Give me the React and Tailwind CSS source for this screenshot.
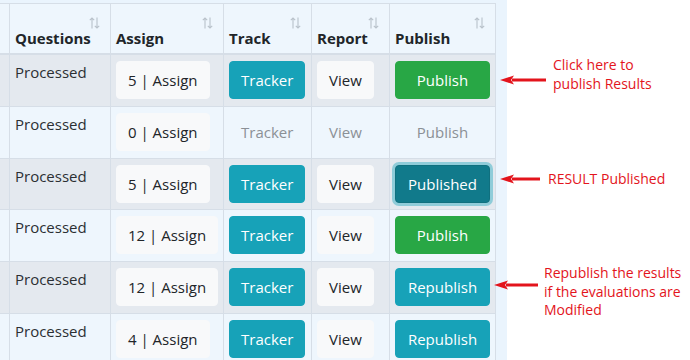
import React from "react";

const font = { fontFamily: '"Open Sans", "Noto Sans", sans-serif' };

function SortIcon() {
  return (
    <svg width="11" height="12" viewBox="0 0 11 12" className="absolute right-[10px] top-[13px]" fill="none" stroke="#b9c2cb" strokeWidth="1.1">
      <path d="M3 11.5V1M0.8 3.2L3 1l2.2 2.2" />
      <path d="M8 0.5V11M5.8 8.8L8 11l2.2-2.2" />
    </svg>
  );
}

const widths = ["w-[10px]", "w-[101px]", "w-[113px]", "w-[88px]", "w-[78px]", "w-[106px]"];

function HeaderCell({ w, label }) {
  return (
    <div className={`${w} relative shrink-0 border-r border-[#d6dee7] ${label ? "px-[5px]" : ""} pb-[4px] flex items-end`}>
      {label && <SortIcon />}
      {label && <span className="text-[15px] font-bold text-[#212529] leading-[22px] whitespace-nowrap">{label}</span>}
    </div>
  );
}

function Btn({ kind, children }) {
  const base = "h-[38px] rounded-[4px] text-[15px] flex items-center justify-center border whitespace-nowrap";
  const cls = {
    light: "bg-[#f8f9fa] border-[#f8f9fa] text-[#212529] px-[11px]",
    info: "bg-[#17a2b8] border-[#17a2b8] text-white px-[11px]",
    success: "bg-[#28a745] border-[#28a745] text-white w-full",
    infoFull: "bg-[#17a2b8] border-[#17a2b8] text-white w-full",
    published: "bg-[#117a8b] border-[#10707f] text-white w-full shadow-[0_0_0_3px_rgba(58,176,195,0.5)]",
    disabled: "bg-transparent border-transparent text-[#8b9096] px-[11px]",
    disabledFull: "bg-transparent border-transparent text-[#8b9096] w-full",
  }[kind];
  return <div className={`${base} ${cls}`}>{children}</div>;
}

const rows = [
  { n: "5", track: "info", view: "light", pub: ["success", "Publish"], h: "h-[52px]" },
  { n: "0", track: "disabled", view: "disabled", pub: ["disabledFull", "Publish"], h: "h-[52px]" },
  { n: "5", track: "info", view: "light", pub: ["published", "Published"], h: "h-[51px]" },
  { n: "12", track: "info", view: "light", pub: ["success", "Publish"], h: "h-[52px]" },
  { n: "12", track: "info", view: "light", pub: ["infoFull", "Republish"], h: "h-[52px]" },
  { n: "4", track: "info", view: "light", pub: ["infoFull", "Republish"], h: "h-[52px]" },
];

function Row({ r, i }) {
  const bg = i % 2 === 0 ? "bg-[#e4e9ef]" : "bg-[#eef6fd]";
  const cell = "shrink-0 border-r border-[#d6dee7]";
  return (
    <div className={`flex ${r.h} border-b border-[#d6dee7] ${bg}`}>
      <div className={`${widths[0]} ${cell}`} />
      <div className={`${widths[1]} ${cell} px-[5px] pt-[5px]`}>
        <span className="text-[15px] leading-[22px] text-[#2b2f33]">Processed</span>
      </div>
      <div className={`${widths[2]} ${cell} flex items-start px-[5px] pt-[6px]`}>
        <Btn kind="light">{r.n} | Assign</Btn>
      </div>
      <div className={`${widths[3]} ${cell} flex items-start px-[5px] pt-[6px]`}>
        <Btn kind={r.track}>Tracker</Btn>
      </div>
      <div className={`${widths[4]} ${cell} flex items-start px-[5px] pt-[6px]`}>
        <Btn kind={r.view}>View</Btn>
      </div>
      <div className={`${widths[5]} ${cell} flex items-start px-[5px] pt-[6px]`}>
        <Btn kind={r.pub[0]}>{r.pub[1]}</Btn>
      </div>
    </div>
  );
}

function Arrow({ x, y, len }) {
  return (
    <svg className="absolute" style={{ left: x, top: y - 6 }} width={len} height="12" viewBox={`0 0 ${len} 12`}>
      <path d={`M12 6H${len}`} stroke="#e3141c" strokeWidth="3" />
      <path d="M0 6L14 1.5L11 6L14 10.5Z" fill="#e3141c" />
    </svg>
  );
}

function Note({ x, y, children }) {
  return (
    <div className="absolute text-[14px] leading-[18.5px] text-[#e3141c]" style={{ left: x, top: y }}>
      {children}
    </div>
  );
}

export default function App() {
  return (
    <div className="relative w-[690px] h-[360px] bg-white overflow-hidden" style={font}>
      <div className="w-[507px] h-[360px] bg-[#eaf4fd] pt-[3px]">
        <div className="w-[496px]">
          <div className="flex h-[52px] border-t border-b-2 border-[#d6dee7] bg-[#eef6fd]">
            <HeaderCell w={widths[0]} />
            <HeaderCell w={widths[1]} label="Questions" />
            <HeaderCell w={widths[2]} label="Assign" />
            <HeaderCell w={widths[3]} label="Track" />
            <HeaderCell w={widths[4]} label="Report" />
            <HeaderCell w={widths[5]} label="Publish" />
          </div>
          {rows.map((r, i) => (
            <Row key={i} r={r} i={i} />
          ))}
        </div>
      </div>
      <Arrow x={500} y={80} len={46} />
      <Arrow x={500} y={179} len={40} />
      <Arrow x={494} y={285} len={44} />
      <Note x={553} y={56}>
        Click here to
        <br />
        publish Results
      </Note>
      <Note x={548} y={170}>RESULT Published</Note>
      <Note x={544} y={264}>
        Republish the results
        <br />
        if the evaluations are
        <br />
        Modified
      </Note>
    </div>
  );
}
